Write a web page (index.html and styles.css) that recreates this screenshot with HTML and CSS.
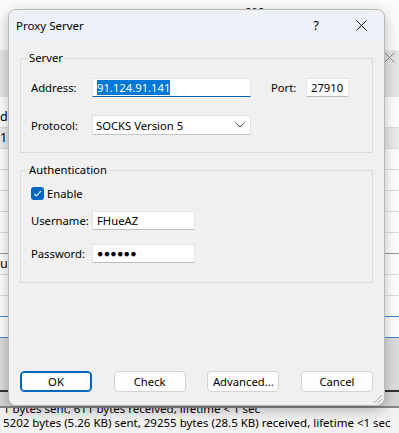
FILE: index.html
```html
<!DOCTYPE html>
<html lang="en">
<head>
    <meta charset="UTF-8">
    <meta name="viewport" content="width=device-width, initial-scale=1.0">
    <title>Proxy Server</title>
    <link rel="stylesheet" href="styles.css">
</head>

<body>

    <!-- app window behind the dialog -->
    <div class="desktop">
        <div class="band band-top">
            <span class="cut cut-a">color</span>
            <span class="cut cut-b">Not connected in the last 5 sec</span>
        </div>
        <div class="band band-head">
            <span class="cell">P</span>
            <svg class="bg-close" width="11" height="11" viewBox="0 0 11 11">
                <path d="M0.5 0.5 L10.5 10.5 M10.5 0.5 L0.5 10.5" stroke="#8a8a8a" stroke-width="1" fill="none"/>
            </svg>
        </div>
        <div class="band band-list">
            <div class="spacer"></div>
            <div class="row">do</div>
            <div class="row shade">1.</div>
            <div class="row"></div>
            <div class="row"></div>
            <div class="row"></div>
            <div class="row"></div>
            <div class="row line"></div>
            <div class="row">u d</div>
            <div class="row"></div>
            <div class="row blue"></div>
            <div class="row blue"></div>
        </div>
        <div class="band band-grey"></div>
        <div class="band band-dark"></div>
        <div class="band band-status">
            <div class="status-line cut-top">1 bytes sent, 611 bytes received, lifetime &lt; 1 sec</div>
            <div class="status-line">5202 bytes (5.26 KB) sent, 29255 bytes (28.5 KB) received, lifetime &lt;1 sec</div>
        </div>
    </div>

    <div class="dialog">
        <div class="titlebar">
            <span class="title">Proxy Server</span>
            <span class="help">?</span>
            <svg class="close" width="11" height="11" viewBox="0 0 11 11">
                <path d="M0.5 0.5 L10.5 10.5 M10.5 0.5 L0.5 10.5" stroke="#1a1a1a" stroke-width="1" fill="none"/>
            </svg>
        </div>

        <div class="content">
            <fieldset class="group server">
                <legend>Server</legend>
                <div class="field-row">
                    <span class="lbl">Address:</span>
                    <div class="textbox address focused"><span class="sel">91.124.91.141</span></div>
                    <span class="lbl port-lbl">Port:</span>
                    <div class="textbox port">27910</div>
                </div>
                <div class="field-row gap-big">
                    <span class="lbl">Protocol:</span>
                    <div class="combo">
                        <span>SOCKS Version 5</span>
                        <svg width="10" height="6" viewBox="0 0 10 6">
                            <path d="M0.5 0.5 L5 5 L9.5 0.5" stroke="#444" stroke-width="1" fill="none"/>
                        </svg>
                    </div>
                </div>
            </fieldset>

            <fieldset class="group auth">
                <legend>Authentication</legend>
                <div class="check-row">
                    <span class="checkbox">
                        <svg width="13" height="13" viewBox="0 0 13 13">
                            <path d="M3.2 6.8 L5.4 9 L9.8 4.2" stroke="#fff" stroke-width="1.1" fill="none"/>
                        </svg>
                    </span>
                    <span>Enable</span>
                </div>
                <div class="field-row user-row">
                    <span class="lbl">Username:</span>
                    <div class="textbox short">FHueAZ</div>
                </div>
                <div class="field-row pass-row">
                    <span class="lbl">Password:</span>
                    <div class="textbox short dots">&#9679;&#9679;&#9679;&#9679;&#9679;&#9679;</div>
                </div>
            </fieldset>

            <div class="buttons">
                <button class="btn default">OK</button>
                <button class="btn">Check</button>
                <button class="btn">Advanced...</button>
                <button class="btn">Cancel</button>
            </div>
        </div>

        <svg class="grip" width="12" height="12" viewBox="0 0 12 12">
            <path d="M11 3 L3 11 M11 7 L7 11" stroke="#b0b0b0" stroke-width="1" fill="none"/>
        </svg>
    </div>

</body>

</html>
```

FILE: styles.css
```css
body {
    margin: 0;
    overflow: hidden;
    font-family: "Noto Sans", "Liberation Sans", sans-serif;
    font-size: 11.25px;
    color: #000;
}

/* background window */
.desktop {
    width: 399px;
    height: 433px;
    display: flex;
    flex-direction: column;
    background: #fff;
}

.band {
    flex: none;
    overflow: hidden;
}

.band-top {
    height: 50px;
    background: #fbfbfb;
    display: flex;
    align-items: flex-start;
}

.cut {
    margin-top: -12px;
    line-height: 15px;
    font-size: 12px;
    color: #111;
}

.cut-a {
    margin-left: 92px;
}

.cut-b {
    margin-left: 125px;
}

.band-head {
    height: 47px;
    background: #e6e6e6;
    display: flex;
    justify-content: space-between;
    align-items: center;
    padding: 0 4px 0 10px;
    color: #999;
    font-size: 14px;
}

.bg-close {
    margin-top: -33px;
}

.band-list {
    height: 241px;
    display: flex;
    flex-direction: column;
}

.spacer {
    height: 10px;
    flex: none;
}

.row {
    flex: none;
    box-sizing: border-box;
    height: 21px;
    line-height: 20px;
    border-bottom: 1px solid #dedede;
    font-size: 12.5px;
}

.row.shade {
    background: #ebebeb;
}

.row.line {
    border-bottom-color: #999;
}

.row.blue {
    border-bottom-color: #3c86d0;
}

.band-grey {
    height: 52px;
    background: #dcdcdc;
}

.band-dark {
    height: 14px;
    background: #d6d6d6;
    border-top: 2px solid #333;
}

.band-status {
    flex: 1;
    background: #f2f2f2;
    padding-left: 3px;
    font-size: 11.5px;
    border-top: 2px solid #888;
}

.status-line {
    line-height: 14px;
    white-space: nowrap;
}

.cut-top {
    margin-top: -6px;
}

/* dialog */
.dialog {
    position: absolute;
    left: 8px;
    top: 9px;
    width: 377px;
    height: 397px;
    box-sizing: border-box;
    background: #f0f0f0;
    border: 1px solid #b9b9b9;
    border-radius: 8px;
    box-shadow: 0 4px 14px rgba(0, 0, 0, 0.28);
    display: flex;
    flex-direction: column;
    overflow: hidden;
}

.titlebar {
    height: 30px;
    flex: none;
    background: #eef0f7;
    display: flex;
    align-items: center;
    padding-left: 7px;
}

.title {
    flex: 1;
    font-size: 11.5px;
}

.help {
    font-size: 13px;
    line-height: 16px;
    margin-right: 37px;
}

.close {
    margin-right: 17px;
}

.content {
    flex: 1;
    display: flex;
    flex-direction: column;
    padding: 10px 11px 13px 11px;
}

.group {
    margin: 0;
    padding: 12px 10px 17px 10px;
    border: 1px solid #dcdcdc;
    min-width: 0;
}

.group legend {
    padding: 0 2px;
    margin-left: -4px;
    line-height: 16px;
}

.auth {
    margin-top: 9px;
    padding-top: 9px;
    padding-bottom: 19px;
}

.field-row {
    display: flex;
    align-items: center;
    height: 19px;
}

.gap-big {
    margin-top: 18px;
    height: 20px;
}

.lbl {
    width: 61px;
    flex: none;
}

.port-lbl {
    width: 35px;
    margin-left: 20px;
}

.textbox {
    box-sizing: border-box;
    height: 19px;
    line-height: 17px;
    background: #fff;
    border: 1px solid #e4e4e4;
    border-bottom-color: #bdbdbd;
    padding: 0 4px;
    white-space: nowrap;
}

.address {
    width: 159px;
}

.focused {
    border-bottom: 1px solid #0067c0;
}

.sel {
    background: #0078d7;
    color: #fff;
    display: inline-block;
    line-height: 15px;
}

.port {
    width: 43px;
}

.short {
    width: 103px;
}

.dots {
    font-size: 10.5px;
    letter-spacing: 0.3px;
}

.combo {
    box-sizing: border-box;
    width: 159px;
    height: 20px;
    background: #fff;
    border: 1px solid #e2e2e2;
    border-bottom-color: #c4c4c4;
    display: flex;
    align-items: center;
    justify-content: space-between;
    padding: 0 5px 0 3px;
}

.check-row {
    display: flex;
    align-items: center;
    height: 13px;
    gap: 3px;
}

.checkbox {
    width: 13px;
    height: 13px;
    background: #0067c0;
    border-radius: 3px;
    display: flex;
}

.user-row {
    margin-top: 11px;
}

.pass-row {
    margin-top: 14px;
}

.buttons {
    margin-top: auto;
    display: flex;
    justify-content: space-between;
}

.btn {
    width: 72px;
    height: 21px;
    box-sizing: border-box;
    background: #fdfdfd;
    border: 1px solid #d3d3d3;
    border-radius: 4px;
    font-family: inherit;
    font-size: 11.25px;
    color: #000;
    padding: 0;
}

.btn.default {
    border-color: #0067c0;
    box-shadow: inset 0 0 0 1px #0067c0;
}

.grip {
    position: absolute;
    right: 1px;
    bottom: 1px;
}
```
